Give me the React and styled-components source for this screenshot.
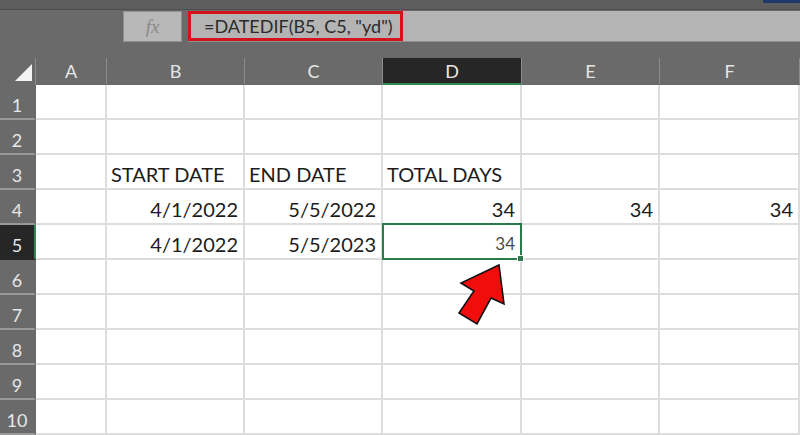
import styled, { createGlobalStyle } from "styled-components";

const GlobalStyle = createGlobalStyle`
  html, body {
    margin: 0;
    padding: 0;
    background: #6a6a6a;
  }
  body {
    font-family: Lato, "Open Sans", "Liberation Sans", sans-serif;
  }
`;

const Window = styled.div`
  width: 800px;
  height: 435px;
  overflow: hidden;
  position: relative;
  display: flex;
  flex-direction: column;
  background: #6a6a6a;
`;

const TitleStrip = styled.div`
  height: 9px;
  background: #5d5d5d;
  display: flex;
  justify-content: flex-end;
`;

const BlueTab = styled.div`
  width: 37px;
  height: 3px;
  background: #1f3a6a;
`;

const FormulaBar = styled.div`
  height: 34px;
  display: flex;
  align-items: stretch;
  padding: 1px 0 1px 123px;
  gap: 6px;
  box-sizing: border-box;
  border-top: 1px solid #4e4e4e;
`;

const FxBox = styled.div`
  width: 59px;
  box-sizing: border-box;
  background: #b8b8b8;
  border: 1px solid #8f8f8f;
  display: flex;
  align-items: center;
  justify-content: center;
  font-family: "Liberation Serif", "DejaVu Serif", serif;
  font-style: italic;
  font-size: 19px;
  color: #8a8a8a;
`;

const FormulaInput = styled.div`
  flex: 1;
  background: #b4b4b4;
  display: flex;
  border-bottom: 1px solid #8f8f8f;
`;

const FormulaText = styled.div`
  width: 215px;
  box-sizing: border-box;
  border: 3px solid #d3141a;
  display: flex;
  align-items: center;
  padding-left: 13px;
  font-size: 18px;
  color: #2b2b2b;
  white-space: nowrap;
`;

const Gap = styled.div`
  height: 15px;
`;

const Sheet = styled.div`
  position: relative;
  display: grid;
  grid-template-columns: 36px 71px 138px 138px 139px 138px 140px;
  grid-template-rows: 27px repeat(10, 35px);
  background: #ffffff;
`;

const Corner = styled.div`
  background: #6a6a6a;
  border-right: 1px solid #8c8c8c;
  position: relative;
  &::after {
    content: "";
    position: absolute;
    right: 3px;
    bottom: 4px;
    width: 0;
    height: 0;
    border-left: 17px solid transparent;
    border-bottom: 17px solid #f4f4f4;
  }
`;

const ColHeader = styled.div`
  box-sizing: border-box;
  background: ${(p) => (p.$active ? "#262626" : "#6a6a6a")};
  border-right: 1px solid #8c8c8c;
  border-bottom: 2px solid ${(p) => (p.$active ? "#2f8a55" : "#6a6a6a")};
  color: #e6e6e6;
  font-size: 18px;
  display: flex;
  align-items: flex-end;
  justify-content: center;
  padding-bottom: 2px;
  line-height: 20px;
`;

const RowHeader = styled.div`
  box-sizing: border-box;
  background: ${(p) => (p.$active ? "#262626" : "#6a6a6a")};
  border-bottom: 2px solid ${(p) => (p.$active ? "#262626" : "#999999")};
  border-right: 2px solid ${(p) => (p.$active ? "#2f8a55" : "#6a6a6a")};
  color: #e6e6e6;
  font-size: 18px;
  display: flex;
  align-items: flex-end;
  justify-content: center;
  padding-bottom: 3px;
  line-height: 20px;
`;

const Cell = styled.div`
  box-sizing: border-box;
  position: relative;
  border-right: 2px solid #dddddd;
  border-bottom: 2px solid #dddddd;
  display: flex;
  align-items: flex-end;
  justify-content: ${(p) => (p.$right ? "flex-end" : "flex-start")};
  padding: 0 5px 4px 4px;
  font-size: ${(p) => (p.$small ? "17px" : "20px")};
  line-height: 20px;
  color: ${(p) => (p.$small ? "#4a4a4a" : "#1c1c1c")};
  white-space: nowrap;

  ${(p) =>
    p.$selected &&
    `
    &::after {
      content: "";
      position: absolute;
      left: -1px;
      top: -2px;
      right: -2px;
      bottom: -2px;
      border: 2px solid #2a7a4b;
    }
    &::before {
      content: "";
      position: absolute;
      right: -4px;
      bottom: -4px;
      width: 5px;
      height: 5px;
      background: #2a7a4b;
      border: 1px solid #ffffff;
      z-index: 2;
    }
  `}
`;

const Arrow = styled.svg`
  position: absolute;
  left: 455px;
  top: 204px;
  width: 52px;
  height: 66px;
  overflow: visible;
`;

const columns = ["A", "B", "C", "D", "E", "F"];

const data = {
  3: { B: "START DATE", C: "END DATE", D: "TOTAL DAYS" },
  4: { B: "4/1/2022", C: "5/5/2022", D: "34", E: "34", F: "34" },
  5: { B: "4/1/2022", C: "5/5/2023", D: "34" },
};

const isNumber = (v) => /^[0-9/]+$/.test(v);

export default function App() {
  const rows = Array.from({ length: 10 }, (_, i) => i + 1);
  return (
    <>
      <GlobalStyle />
      <Window>
        <TitleStrip>
          <BlueTab />
        </TitleStrip>
        <FormulaBar>
          <FxBox>fx</FxBox>
          <FormulaInput>
            <FormulaText>=DATEDIF(B5, C5, "yd")</FormulaText>
          </FormulaInput>
        </FormulaBar>
        <Gap />
        <Sheet>
          <Corner />
          {columns.map((c) => (
            <ColHeader key={c} $active={c === "D"}>
              {c}
            </ColHeader>
          ))}
          {rows.map((r) => (
            <RowBlock key={r} r={r} />
          ))}
          <Arrow viewBox="0 0 52 66">
            <polygon
              points="44,3 49,42 36,36 22,62 4,51 19,29 6,21"
              fill="#f20d0d"
              stroke="#111"
              strokeWidth="1.6"
              strokeLinejoin="miter"
            />
          </Arrow>
        </Sheet>
      </Window>
    </>
  );
}

function RowBlock({ r }) {
  const row = data[r] || {};
  return (
    <>
      <RowHeader $active={r === 5}>{r}</RowHeader>
      {columns.map((c) => {
        const v = row[c];
        const selected = r === 5 && c === "D";
        return (
          <Cell
            key={c}
            $right={v && isNumber(v)}
            $selected={selected}
            $small={selected}
          >
            {v}
          </Cell>
        );
      })}
    </>
  );
}
